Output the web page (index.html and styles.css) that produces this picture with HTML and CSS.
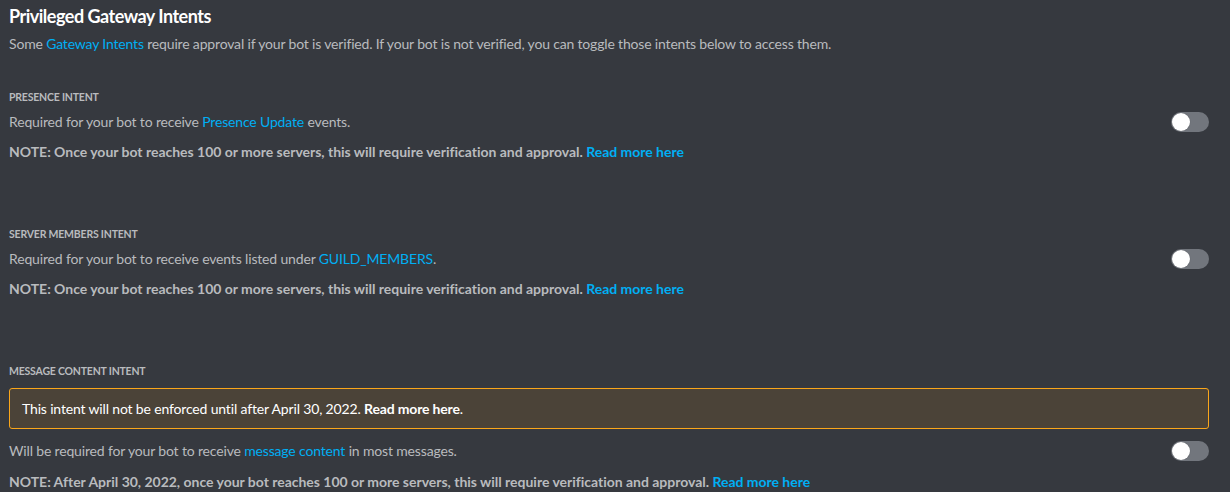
FILE: index.html
```html
<!DOCTYPE html>
<html>
<head>
<meta charset="utf-8">
<link rel="stylesheet" href="styles.css">
</head>
<body>
<main class="page">
  <h2 class="title">Privileged Gateway Intents</h2>
  <p class="desc">Some <a class="link">Gateway Intents</a> require approval if your bot is verified. If your bot is not verified, you can toggle those intents below to access them.</p>

  <section class="intent">
    <h3 class="label">PRESENCE INTENT</h3>
    <div class="row">
      <p class="text">Required for your bot to receive <a class="link">Presence Update</a> events.</p>
      <span class="toggle"><span class="knob"></span></span>
    </div>
    <p class="note">NOTE: Once your bot reaches 100 or more servers, this will require verification and approval. <a class="link">Read more here</a></p>
  </section>

  <section class="intent">
    <h3 class="label">SERVER MEMBERS INTENT</h3>
    <div class="row">
      <p class="text">Required for your bot to receive events listed under <a class="link">GUILD_MEMBERS</a>.</p>
      <span class="toggle"><span class="knob"></span></span>
    </div>
    <p class="note">NOTE: Once your bot reaches 100 or more servers, this will require verification and approval. <a class="link">Read more here</a></p>
  </section>

  <section class="intent">
    <h3 class="label">MESSAGE CONTENT INTENT</h3>
    <div class="warning">This intent will not be enforced until after April 30, 2022. <strong>Read more here</strong>.</div>
    <div class="row">
      <p class="text">Will be required for your bot to receive <a class="link">message content</a> in most messages.</p>
      <span class="toggle"><span class="knob"></span></span>
    </div>
    <p class="note note-last">NOTE: After April 30, 2022, once your bot reaches 100 or more servers, this will require verification and approval. <a class="link">Read more here</a></p>
  </section>
</main>
</body>
</html>
```
FILE: styles.css
```css
html, body {
  margin: 0;
  padding: 0;
  background: #36393f;
}
body {
  font-family: Lato, "Noto Sans", sans-serif;
  color: #b9bbbe;
  width: 1230px;
  height: 492px;
  overflow: hidden;
}
.page {
  width: 1200px;
  padding: 4px 0 0 9px;
}
.title {
  margin: 0;
  font-size: 18px;
  line-height: 24px;
  font-weight: 700;
  letter-spacing: -0.5px;
  color: #ffffff;
}
.desc {
  margin: 6px 0 0;
  font-size: 14px;
  line-height: 20px;
  letter-spacing: -0.17px;
}
.link {
  color: #00aff4;
  text-decoration: none;
}
.intent {
  margin-top: 35px;
}
.intent + .intent {
  margin-top: 64px;
}
.label {
  margin: 0;
  font-size: 10.5px;
  line-height: 16px;
  font-weight: 700;
  letter-spacing: -0.2px;
  color: #b9bbbe;
}
.row {
  display: flex;
  align-items: center;
  justify-content: space-between;
  margin-top: 7px;
}
.text {
  margin: 0;
  font-size: 14px;
  line-height: 20px;
  letter-spacing: -0.16px;
}
.note {
  margin: 10px 0 0;
  font-size: 14px;
  line-height: 20px;
  font-weight: 700;
  letter-spacing: -0.02px;
}
.note-last {
  margin-top: 11px;
}
.warning {
  margin-top: 9px;
  box-sizing: border-box;
  height: 41px;
  padding: 0 12px;
  line-height: 39px;
  background: #4b4338;
  border: 1px solid #faa61a;
  border-radius: 3px;
  color: #ffffff;
  font-size: 14px;
  letter-spacing: -0.16px;
}
.warning strong {
  font-weight: 700;
}
.warning + .row {
  margin-top: 12px;
}
.toggle {
  position: relative;
  display: inline-block;
  width: 38px;
  height: 20px;
  border-radius: 10px;
  background: #72767d;
  flex-shrink: 0;
}
.knob {
  position: absolute;
  left: 1px;
  top: 1px;
  width: 18px;
  height: 18px;
  border-radius: 50%;
  background: #ffffff;
  box-shadow: 0 0 1px rgba(0, 0, 0, 0.3);
}
```
